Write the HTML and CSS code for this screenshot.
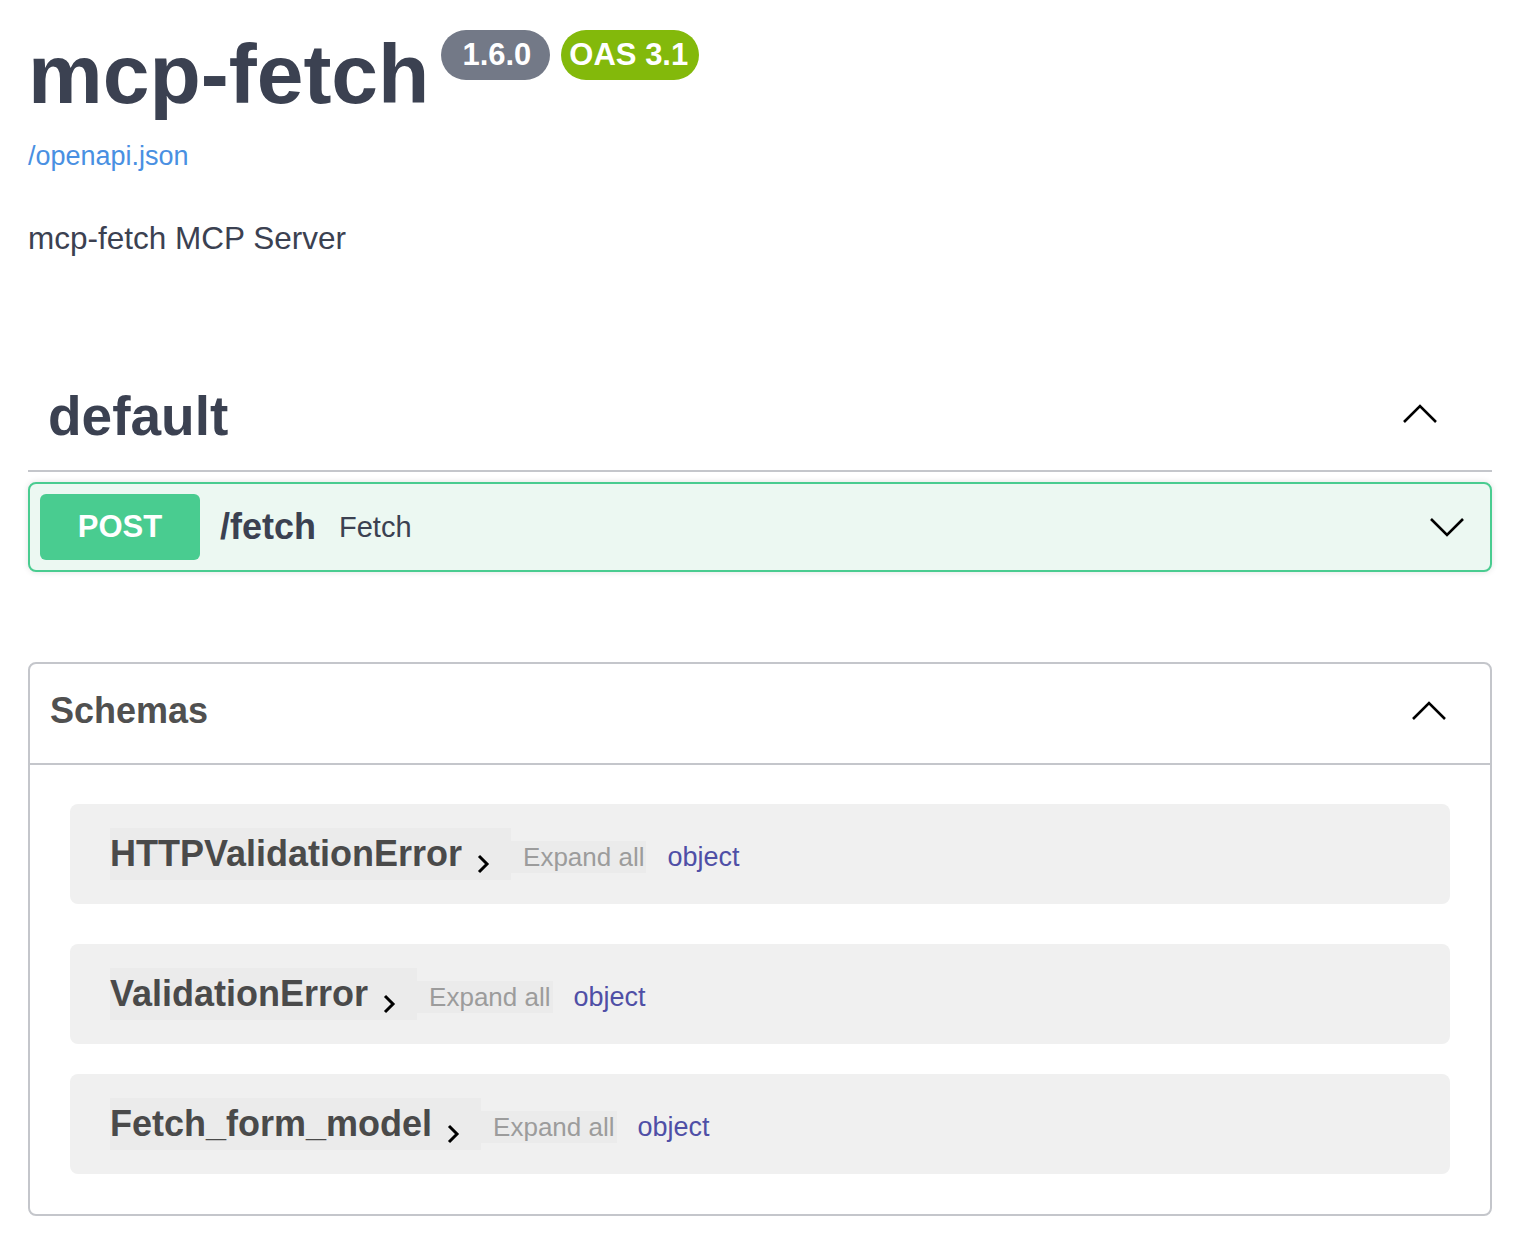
FILE: index.html
```html
<!DOCTYPE html>
<html lang="en">
<head>
<meta charset="utf-8">
<title>mcp-fetch</title>
<link rel="stylesheet" href="styles.css">
</head>
<body>
<div class="page">
  <header class="info">
    <div class="title-row">
      <h1 class="title">mcp-fetch</h1>
      <span class="badge badge-version">1.6.0</span>
      <span class="badge badge-oas">OAS 3.1</span>
    </div>
    <a class="spec-link" href="#">/openapi.json</a>
    <p class="description">mcp-fetch MCP Server</p>
  </header>

  <section class="tag-section">
    <div class="tag-header">
      <h3 class="tag-name">default</h3>
      <svg class="chev" width="36" height="20" viewBox="0 0 36 20"><polyline points="2,18 18,2 34,18" fill="none" stroke="#000" stroke-width="2.6"/></svg>
    </div>
    <div class="opblock">
      <span class="method">POST</span>
      <span class="path">/fetch</span>
      <span class="summary">Fetch</span>
      <svg class="chev" width="36" height="20" viewBox="0 0 36 20"><polyline points="2,2 18,18 34,2" fill="none" stroke="#000" stroke-width="2.6"/></svg>
    </div>
  </section>

  <section class="models">
    <div class="models-header">
      <h4 class="models-title">Schemas</h4>
      <svg class="chev" width="36" height="20" viewBox="0 0 36 20"><polyline points="2,18 18,2 34,18" fill="none" stroke="#000" stroke-width="2.6"/></svg>
    </div>
    <div class="models-body">
      <div class="model-container">
        <div class="model-row">
          <span class="model-title">HTTPValidationError<svg class="toggle" width="14" height="22" viewBox="0 0 14 22"><polyline points="3,4 11,12 3,20" fill="none" stroke="#000" stroke-width="3"/></svg></span>
          <span class="expand">Expand all</span>
          <span class="type">object</span>
        </div>
      </div>
      <div class="model-container">
        <div class="model-row">
          <span class="model-title">ValidationError<svg class="toggle" width="14" height="22" viewBox="0 0 14 22"><polyline points="3,4 11,12 3,20" fill="none" stroke="#000" stroke-width="3"/></svg></span>
          <span class="expand">Expand all</span>
          <span class="type">object</span>
        </div>
      </div>
      <div class="model-container tight">
        <div class="model-row">
          <span class="model-title">Fetch_form_model<svg class="toggle" width="14" height="22" viewBox="0 0 14 22"><polyline points="3,4 11,12 3,20" fill="none" stroke="#000" stroke-width="3"/></svg></span>
          <span class="expand">Expand all</span>
          <span class="type">object</span>
        </div>
      </div>
    </div>
  </section>
</div>
</body>
</html>
```

FILE: styles.css
```css
body {
  margin: 0;
  background: #fff;
  font-family: "Liberation Sans", Arial, sans-serif;
  color: #3b4151;
}

.page {
  padding: 0 30px 30px 28px;
}

/* Info header */
.title-row {
  display: flex;
  align-items: flex-start;
  padding-top: 30px;
}

.title {
  margin: 2px 12px 0 0;
  font-size: 84px;
  line-height: 84px;
  font-weight: 700;
  color: #3b4151;
}

.badge {
  height: 50px;
  line-height: 50px;
  border-radius: 25px;
  color: #fff;
  font-size: 31px;
  font-weight: 700;
}

.badge-version {
  background: #737987;
  padding: 0 19px 0 21px;
  margin-right: 11px;
}

.badge-oas {
  background: #83b90b;
  padding: 0 11px 0 8px;
}

.spec-link {
  display: block;
  margin-top: 25px;
  font-size: 27px;
  line-height: 31px;
  color: #4990e2;
  text-decoration: none;
}

.description {
  margin: 48px 0 0;
  font-size: 31.5px;
  line-height: 36px;
  color: #3b4151;
}

/* Tag section */
.tag-section {
  margin-top: 106px;
}

.tag-header {
  display: flex;
  align-items: center;
  justify-content: space-between;
  padding: 21px 54px 21px 20px;
  border-bottom: 2px solid #c4c6cb;
}

.tag-name {
  margin: 0;
  font-size: 55px;
  line-height: 66px;
  font-weight: 700;
  color: #3b4151;
}

.tag-header .chev {
  margin-top: -4px;
}

.chev {
  display: block;
  flex: none;
}

.opblock {
  margin-top: 10px;
  display: flex;
  align-items: center;
  padding: 10px 25px 10px 10px;
  border: 2px solid #49cc90;
  border-radius: 8px;
  background: #ecf8f2;
  box-shadow: 0 0 6px rgba(0, 0, 0, 0.12);
}

.method {
  width: 160px;
  height: 66px;
  display: flex;
  align-items: center;
  justify-content: center;
  background: #49cc90;
  border-radius: 6px;
  color: #fff;
  font-size: 31px;
  font-weight: 700;
}

.path {
  margin-left: 20px;
  font-size: 36px;
  font-weight: 700;
  color: #3b4151;
}

.summary {
  margin-left: 23px;
  flex: 1;
  font-size: 29px;
  color: #3b4151;
}

/* Schemas */
.models {
  margin-top: 90px;
  border: 2px solid #c4c6cb;
  border-radius: 8px;
}

.models-header {
  height: 99px;
  display: flex;
  align-items: center;
  justify-content: space-between;
  padding: 0 43px 0 20px;
  border-bottom: 2px solid #c4c6cb;
}

.models-title {
  margin: 0 0 6px;
  font-size: 36px;
  line-height: 42px;
  font-weight: 700;
  color: #505050;
}

.models-header .chev {
  margin-top: -6px;
}

.models-body {
  padding: 39px 40px 40px;
}

.model-container {
  height: 100px;
  display: flex;
  align-items: center;
  padding: 0 40px;
  background: #f0f0f0;
  border-radius: 8px;
}

.model-container + .model-container {
  margin-top: 40px;
}

.model-container.tight {
  margin-top: 30px;
}

.model-row {
  display: flex;
  align-items: baseline;
}

.model-title {
  display: block;
  background: #ebebeb;
  font-size: 36px;
  line-height: 52px;
  font-weight: 700;
  color: #4a4a4a;
}

.toggle {
  display: inline-block;
  vertical-align: -8px;
  margin: 0 21px 0 14px;
}

.expand {
  display: block;
  background: #ebebeb;
  font-size: 26px;
  line-height: 32px;
  padding: 0 2px 0 12px;
  color: #9c9c9c;
}

.type {
  margin-left: 21px;
  font-size: 27px;
  color: #4f4fa6;
}
```
